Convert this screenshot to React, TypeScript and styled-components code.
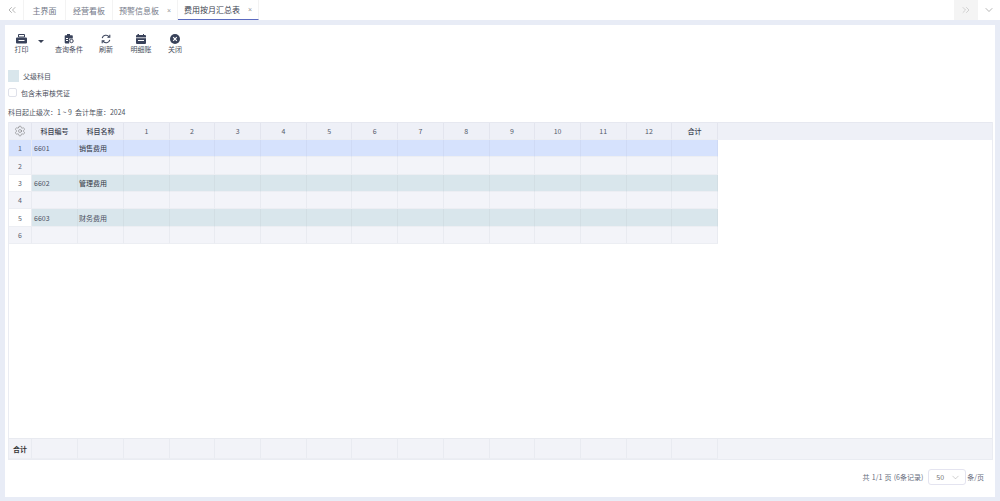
import styled, { createGlobalStyle } from 'styled-components';
import { ChevronDown, ChevronsLeft, ChevronsRight, Settings } from 'lucide-react';

const GlobalStyle = createGlobalStyle`
    html, body {
        margin: 0;
        padding: 0;
        background: #e8ecf6;
    }
    * {
        box-sizing: border-box;
    }
`;

const Page = styled.div`
    width: 1000px;
    height: 501px;
    display: flex;
    flex-direction: column;
    overflow: hidden;
    font-family: 'Noto Sans CJK SC', 'Liberation Sans', sans-serif;
    font-size: 7px;
    color: #4c5260;
    background: #e8ecf6;
`;

const TabBar = styled.div`
    height: 20px;
    flex: none;
    display: flex;
    align-items: stretch;
    background: #fff;
`;

const TabArrow = styled.div<{ $shaded?: boolean; $dark?: boolean; $width?: number; $flat?: boolean }>`
    width: ${(p) => p.$width ?? 24}px;
    display: flex;
    align-items: center;
    justify-content: center;
    color: ${(p) => (p.$dark ? '#777' : '#b4b4b4')};
    background: ${(p) => (p.$shaded ? '#f4f4f4' : '#fff')};
    border-right: ${(p) => (p.$flat ? 'none' : '1px solid #f3f3f3')};
`;

const Tab = styled.div<{ $active?: boolean; $width: number }>`
    width: ${(p) => p.$width}px;
    display: flex;
    align-items: center;
    justify-content: center;
    gap: 8px;
    font-size: 8px;
    color: ${(p) => (p.$active ? '#3c4250' : '#747988')};
    border-right: 1px solid #f3f3f3;
    border-bottom: ${(p) => (p.$active ? '1px solid #5b6bc0' : 'none')};
`;

const TabClose = styled.span`
    font-size: 7px;
    color: #999;
    font-family: 'Liberation Sans', sans-serif;
`;

const TabSpacer = styled.div`
    flex: 1;
`;

const Panel = styled.main`
    flex: 1;
    min-height: 0;
    margin: 5px 5px 4px 5px;
    padding: 0 2px 0 3px;
    display: flex;
    flex-direction: column;
    background: #fff;
`;

const Toolbar = styled.div`
    height: 34px;
    flex: none;
    padding: 9px 0 0 5px;
    display: flex;
    align-items: flex-start;
`;

const ToolButton = styled.div<{ $width: number }>`
    width: ${(p) => p.$width}px;
    display: flex;
    flex-direction: column;
    align-items: center;
    gap: 1px;
    font-size: 7px;
    line-height: 9px;
    color: #4a5060;
`;

const ToolCaret = styled.div`
    width: 6px;
    height: 3px;
    margin: 6px 9px 0 8px;
    border-left: 3px solid transparent;
    border-right: 3px solid transparent;
    border-top: 3px solid #3a4256;
`;

const Legend = styled.div`
    margin-top: 11px;
    display: flex;
    align-items: center;
    gap: 4px;
    height: 12px;
    line-height: 12px;
`;

const LegendSwatch = styled.span`
    width: 11px;
    height: 12px;
    background: #d9e6ec;
`;

const CheckRow = styled.label`
    margin-top: 6px;
    display: flex;
    align-items: center;
    gap: 4px;
    height: 9px;
`;

const CheckBox = styled.span`
    width: 9px;
    height: 9px;
    background: #fff;
    border: 1px solid #dfe1ea;
    border-radius: 2px;
`;

const Summary = styled.div`
    margin-top: 8px;
    height: 14px;
    line-height: 14px;
    flex: none;
`;

const TableFrame = styled.div`
    flex: 1;
    min-height: 0;
    width: 985px;
    margin-top: 3px;
    display: flex;
    flex-direction: column;
    border: 1px solid #eaecf2;
    border-top: none;
`;

const Row = styled.div`
    display: flex;
    flex: none;
    height: 17.35px;
`;

const FooterRow = styled(Row)`
    height: 21px;
    margin-top: auto;
    background: #f2f3f8;
    border-top: 1px solid #e8eaf0;
`;

const HeaderRow = styled(Row)`
    height: 18px;
    background: #eef0f7;
    border-top: 1px solid #e6e8f0;
`;

const BaseCell = styled.div<{ $width: number }>`
    width: ${(p) => p.$width}px;
    flex: none;
    display: flex;
    align-items: center;
    border-right: 1px solid #e9ebf1;
    border-bottom: 1px solid #eceef3;
`;

const HeadCell = styled(BaseCell)<{ $strong?: boolean }>`
    justify-content: center;
    font-weight: ${(p) => (p.$strong ? 500 : 400)};
    color: ${(p) => (p.$strong ? '#3c4250' : '#555b6a')};
    border-right-color: #e3e5ee;
`;

const IndexCell = styled(BaseCell)<{ $bg: string }>`
    justify-content: center;
    color: #5a6070;
    background: ${(p) => p.$bg};
`;

const DataCell = styled(BaseCell)<{ $bg: string; $strong?: boolean; $inset?: number }>`
    padding-left: ${(p) => p.$inset ?? 2}px;
    background: ${(p) => p.$bg};
    color: ${(p) => (p.$strong ? '#2e3440' : '#4a5060')};
    border-right-color: ${(p) => (p.$bg === '#f3f4f9' ? '#e9ebf1' : 'rgba(0, 0, 0, 0.03)')};
`;

const FooterLabel = styled(BaseCell)`
    justify-content: center;
    font-weight: 700;
    color: #333;
`;

const HeadFill = styled.div`
    flex: 1;
`;

const Pager = styled.div`
    height: 37px;
    flex: none;
    padding: 0 9px 3px 0;
    display: flex;
    align-items: center;
    justify-content: flex-end;
    word-spacing: 0.6px;
    color: #666c7c;
`;

const PageSelect = styled.div`
    width: 38px;
    height: 16px;
    margin: 0 1px 0 5px;
    padding: 0 4px 0 7px;
    display: flex;
    align-items: center;
    justify-content: space-between;
    color: #777;
    border: 1px solid #e4e4f0;
    border-radius: 3px;
`;

const ICON = '#39425a';

const PrintIcon = () => (
    <svg width="11" height="10" viewBox="0 0 11 10" fill={ICON}>
        <path d="M2.5 0.5h6v2.5h-6z" fill="none" stroke={ICON} />
        <path d="M1 3.5h9a1 1 0 0 1 1 1v4a1 1 0 0 1-1 1H1a1 1 0 0 1-1-1v-4a1 1 0 0 1 1-1z" />
        <path d="M2.5 6h6v1h-6z" fill="#fff" />
    </svg>
);

const QueryIcon = () => (
    <svg width="10" height="10" viewBox="0 0 10 10" fill={ICON}>
        <path d="M1.5 1.2h6.5a.8.8 0 0 1 .8.8v2.4H5.2v5H1.5a.8.8 0 0 1-.8-.8V2a.8.8 0 0 1 .8-.8z" />
        <path d="M3 0h3v2H3z" />
        <path d="M2 4h2v1H2zM2 6h2v1H2z" fill="#fff" />
        <circle cx="7.5" cy="7" r="1.7" fill="none" stroke={ICON} />
    </svg>
);

const RefreshIcon = () => (
    <svg width="10" height="10" viewBox="0 0 10 10" fill="none" stroke={ICON} strokeWidth="1.1">
        <path d="M1.2 4.2a3.9 3.9 0 0 1 6.9-1.4" />
        <path d="M8.8 5.8a3.9 3.9 0 0 1-6.9 1.4" />
        <path d="M8.8 0.8v2.4H6.4M1.2 9.2V6.8h2.4" />
    </svg>
);

const LedgerIcon = () => (
    <svg width="10" height="10" viewBox="0 0 10 10" fill={ICON}>
        <path d="M2 0h1v1h4V0h1v1h1a1 1 0 0 1 1 1v7a1 1 0 0 1-1 1H1a1 1 0 0 1-1-1V2a1 1 0 0 1 1-1z" />
        <path d="M0 3.4h10v.8H0z" fill="#fff" />
        <path d="M2 6h6v1H2z" fill="#fff" />
    </svg>
);

const CloseIcon = () => (
    <svg width="10" height="10" viewBox="0 0 10 10">
        <circle cx="5" cy="5" r="5" fill={ICON} />
        <path d="M3.2 3.2l3.6 3.6M6.8 3.2l-3.6 3.6" stroke="#fff" strokeWidth="1.2" />
    </svg>
);

const MONTH = 45.7;
const WIDTHS = [23, 46, 46, ...Array<number>(13).fill(MONTH)];
const HEADERS = ['', '科目编号', '科目名称', '1', '2', '3', '4', '5', '6', '7', '8', '9', '10', '11', '12', '合计'];
const MONTH_COLS = WIDTHS.slice(3);

const ROWS = [
    { no: 1, code: '6601', name: '销售费用', bg: '#d6e2fd', indexBg: '#d6e2fd', strong: true },
    { no: 2, code: '', name: '', bg: '#f3f4f9', indexBg: '#f3f4f9' },
    { no: 3, code: '6602', name: '管理费用', bg: '#d9e6ec', indexBg: '#fff', strong: true },
    { no: 4, code: '', name: '', bg: '#f3f4f9', indexBg: '#f3f4f9' },
    { no: 5, code: '6603', name: '财务费用', bg: '#d9e6ec', indexBg: '#fff' },
    { no: 6, code: '', name: '', bg: '#f3f4f9', indexBg: '#f3f4f9' },
];

export default function App() {
    return (
        <Page>
            <GlobalStyle />
            <TabBar>
                <TabArrow $dark>
                    <ChevronsLeft size={12} strokeWidth={1.1} />
                </TabArrow>
                <Tab $width={42}>主界面</Tab>
                <Tab $width={47}>经营看板</Tab>
                <Tab $width={65}>
                    预警信息板<TabClose>×</TabClose>
                </Tab>
                <Tab $active $width={81}>
                    费用按月汇总表<TabClose>×</TabClose>
                </Tab>
                <TabSpacer />
                <TabArrow $shaded $flat>
                    <ChevronsRight size={12} strokeWidth={1.1} />
                </TabArrow>
                <TabArrow $dark $flat $width={22}>
                    <ChevronDown size={12} strokeWidth={1.1} />
                </TabArrow>
            </TabBar>
            <Panel>
                <Toolbar>
                    <ToolButton $width={17}>
                        <PrintIcon />
                        打印
                    </ToolButton>
                    <ToolCaret />
                    <ToolButton $width={32}>
                        <QueryIcon />
                        查询条件
                    </ToolButton>
                    <ToolButton $width={42}>
                        <RefreshIcon />
                        刷新
                    </ToolButton>
                    <ToolButton $width={28}>
                        <LedgerIcon />
                        明细账
                    </ToolButton>
                    <ToolButton $width={40}>
                        <CloseIcon />
                        关闭
                    </ToolButton>
                </Toolbar>
                <Legend>
                    <LegendSwatch />
                    父级科目
                </Legend>
                <CheckRow>
                    <CheckBox />
                    包含未审核凭证
                </CheckRow>
                <Summary>科目起止级次：1 ~ 9&nbsp;&nbsp;会计年度：2024</Summary>
                <TableFrame>
                    <HeaderRow>
                        {HEADERS.map((h, i) => (
                            <HeadCell key={i} $width={WIDTHS[i]} $strong={i < 3 || i === 15}>
                                {i === 0 ? <Settings size={12} strokeWidth={1} color="#666" /> : h}
                            </HeadCell>
                        ))}
                        <HeadFill />
                    </HeaderRow>
                    {ROWS.map((r) => (
                        <Row key={r.no}>
                            <IndexCell $width={WIDTHS[0]} $bg={r.indexBg}>
                                {r.no}
                            </IndexCell>
                            <DataCell $width={WIDTHS[1]} $bg={r.bg}>
                                {r.code}
                            </DataCell>
                            <DataCell $width={WIDTHS[2]} $bg={r.bg} $strong={r.strong} $inset={1}>
                                {r.name}
                            </DataCell>
                            {MONTH_COLS.map((w, i) => (
                                <DataCell key={i} $width={w} $bg={r.bg} />
                            ))}
                        </Row>
                    ))}
                    <FooterRow>
                        <FooterLabel $width={WIDTHS[0]}>合计</FooterLabel>
                        {WIDTHS.slice(1).map((w, i) => (
                            <BaseCell key={i} $width={w} />
                        ))}
                        <HeadFill />
                    </FooterRow>
                </TableFrame>
                <Pager>
                    共 1/1 页 (6条记录)
                    <PageSelect>
                        50
                        <ChevronDown size={11} strokeWidth={1} color="#999" />
                    </PageSelect>
                    条/页
                </Pager>
            </Panel>
        </Page>
    );
}
